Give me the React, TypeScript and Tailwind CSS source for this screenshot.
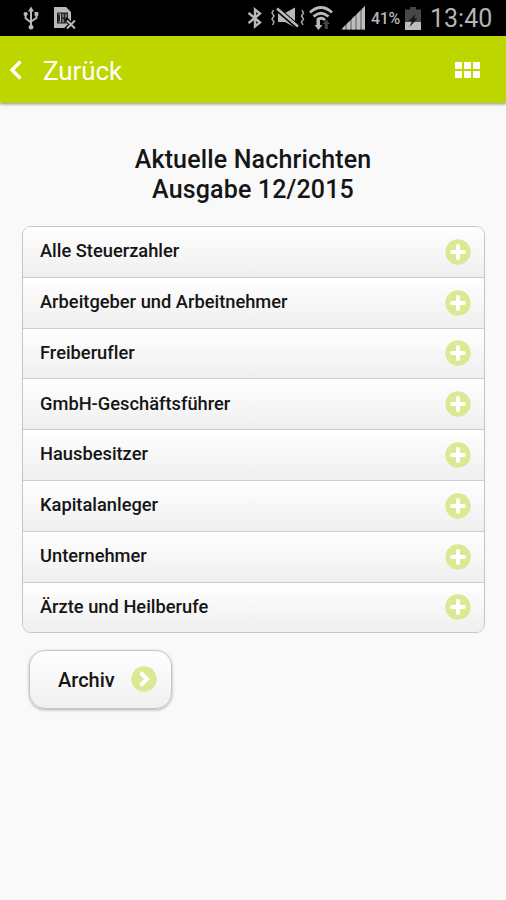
const nachrichten = [
  "Alle Steuerzahler",
  "Arbeitgeber und Arbeitnehmer",
  "Freiberufler",
  "GmbH-Geschäftsführer",
  "Hausbesitzer",
  "Kapitalanleger",
  "Unternehmer",
  "Ärzte und Heilberufe",
];

function UsbIcon() {
  return (
    <svg width="16" height="24" viewBox="0 0 16 24" fill="none" stroke="#b9b9b9" strokeWidth="2">
      <path d="M8 4v17M2.6 9v3.2L8 16.5M13.4 8v4L8 15.5" />
      <path d="M8 0.5l3 5H5z" fill="#b9b9b9" stroke="none" />
      <circle cx="8" cy="21.2" r="2.4" fill="#b9b9b9" stroke="none" />
      <circle cx="2.6" cy="8" r="2.1" fill="#b9b9b9" stroke="none" />
      <path d="M11.5 6h3.8v3.8h-3.8z" fill="#b9b9b9" stroke="none" />
    </svg>
  );
}

function SimIcon() {
  return (
    <svg width="23" height="24" viewBox="0 0 23 24" fill="none">
      <path d="M0 1h12l5 5v10l-4 6H0z" fill="#b9b9b9" />
      <path d="M3 6.5h11v11H3z" fill="#222" />
      <path d="M4.5 8h2v8h-2M9 8v3.5M12 8v3.5M9 13v3.5M12 13v3.5" stroke="#b9b9b9" strokeWidth="1" />
      <path d="M12 13l9.5 10M22 13.5L12 23" stroke="#000" strokeWidth="4" />
      <path d="M13 14.5l8 8M21 14.5l-8 8" stroke="#b9b9b9" strokeWidth="2" />
    </svg>
  );
}

function BluetoothIcon() {
  return (
    <svg width="16" height="22" viewBox="0 0 16 22" fill="none" stroke="#b9b9b9" strokeWidth="2.4">
      <path d="M1.5 5.8l11.5 9.7L8 19.5V2.5l5 4-11.5 9.7" />
    </svg>
  );
}

function MuteIcon() {
  return (
    <svg width="34" height="22" viewBox="0 0 34 22" fill="none">
      <path d="M7 6h7l10-5.5v20L14 15H7z" fill="#b9b9b9" />
      <path d="M5 1L27 20" stroke="#000" strokeWidth="5" />
      <path d="M6 1.5L27 19.5" stroke="#b9b9b9" strokeWidth="2.6" />
      <path d="M2.5 3l-1.500 3 2 3-2 3 2 3-1.500 3M31 3l1.500 3-2 3 2 3-2 3 1.500 3" stroke="#a6a6a6" strokeWidth="1.5" />
    </svg>
  );
}

function WifiIcon() {
  return (
    <svg width="24" height="25" viewBox="0 0 24 25" fill="none">
      <path d="M1 6.5Q12-3.500 23 6.500M4.500 10.500Q12 4 19.500 10.500M8 14Q12 10.500 16 14" stroke="#b9b9b9" strokeWidth="2.8" />
      <path d="M7.5 14H11v5h2.500L9.500 24 5.500 19h2z" fill="#b9b9b9" />
      <path d="M15.700 23v-5h-2.200l3.800-4.500 3.800 4.500h-2.300v5z" fill="#444" />
    </svg>
  );
}

function SignalIcon() {
  return (
    <svg width="24" height="24" viewBox="0 0 24 24">
      <path d="M0 23.500L24 0v23.500z" fill="#8c8c8c" />
      <path d="M2 21.500l2-2v4H2zM6 17.700l3-3v8.800H6zM11 12.800l3-3v13.700h-3zM16 8l3-3v18.500h-3zM21 3l3-3v23.500h-3z" fill="#bdbdbd" />
    </svg>
  );
}

function BatteryIcon() {
  return (
    <svg width="16" height="23" viewBox="0 0 16 23">
      <path d="M5 0h6v2.500h5V23H0V2.500h5z" fill="#474747" />
      <path d="M0 15h16v8H0z" fill="#bdbdbd" />
      <path d="M11 7L3.500 14h3.500L4.500 20l8-8.500H9z" fill="#161616" />
    </svg>
  );
}

function StatusBar() {
  return (
    <div className="flex h-9 items-center justify-between bg-black text-[#b5b5b5]">
      <div className="flex items-center gap-[15px] pl-[23px]">
        <UsbIcon />
        <SimIcon />
      </div>
      <div className="flex items-center pr-[13px]">
        <BluetoothIcon />
        <div className="ml-2 flex">
          <MuteIcon />
        </div>
        <div className="ml-1 flex">
          <WifiIcon />
        </div>
        <div className="ml-2 flex">
          <SignalIcon />
        </div>
        <span className="ml-1.5 w-[31px] pt-0.5 text-[16px] leading-none font-medium tracking-[-0.4px] whitespace-nowrap">41%</span>
        <div className="ml-[3px] flex">
          <BatteryIcon />
        </div>
        <span className="ml-[9px] w-[63px] text-[25px] leading-none whitespace-nowrap">13:40</span>
      </div>
    </div>
  );
}

function BackIcon() {
  return (
    <svg width="13" height="20" viewBox="0 0 13 20" fill="none">
      <path d="M11.500 1.500L3 10l8.500 8.500" stroke="#fff" strokeWidth="3.300" />
    </svg>
  );
}

function PlusIcon() {
  return (
    <svg width="26" height="26" viewBox="0 0 26 26">
      <circle cx="13" cy="13" r="12.700" fill="#dbe994" />
      <path d="M13 7v12M7 13h12" stroke="#fff" strokeWidth="4" strokeLinecap="round" />
    </svg>
  );
}

function ArrowIcon() {
  return (
    <svg width="26" height="26" viewBox="0 0 26 26" fill="none">
      <circle cx="13" cy="13" r="12.700" fill="#dbe994" />
      <path d="M9.500 6.500l6.500 6.500-6.500 6.500" stroke="#fff" strokeWidth="4" />
    </svg>
  );
}

export default function App() {
  return (
    <div className="h-[900px] w-[506px] overflow-hidden bg-[#f9f9f9] font-['Roboto',sans-serif] text-[#151515]">
      <StatusBar />

      <header className="flex h-[67px] items-center justify-between bg-[#bed600] pr-[26px] pl-[9px] text-white shadow-[0_1px_3px_rgba(0,0,0,0.45)]">
        <div className="flex items-center">
          <BackIcon />
          <span className="ml-[21px] pt-0.5 text-[26px] leading-none tracking-[-0.1px]">Zurück</span>
        </div>
        <div className="grid grid-cols-3 gap-0.5">
          {[0, 1, 2, 3, 4, 5].map((i) => (
            <div key={i} className="size-[7px] bg-white" />
          ))}
        </div>
      </header>

      <main className="px-[22px] pt-[42px]">
        <h1 className="text-center text-[25px] leading-[29.5px] font-medium tracking-[0.15px]">
          Aktuelle Nachrichten
          <br />
          Ausgabe 12/2015
        </h1>

        <ul className="mt-[22px] w-[463px] overflow-hidden rounded-[9px] border border-[#c5c5c5]">
          {nachrichten.map((titel) => (
            <li
              key={titel}
              className="flex h-[50.8px] items-center justify-between border-b border-[#cecece] bg-linear-to-b from-white to-[#efefef] pr-[13px] pl-[17px] last:h-[49.4px] last:border-b-0"
            >
              <span className="pb-px text-[18.3px] leading-none font-medium [font-variant-ligatures:none]">{titel}</span>
              <PlusIcon />
            </li>
          ))}
        </ul>

        <button className="mt-[17px] ml-[7px] flex h-[59px] w-[143px] items-center justify-between rounded-[16px] border border-[#c5c5c5] bg-linear-to-b from-white to-[#f0f0f0] pr-[14px] pl-7 shadow-[0_1px_3px_rgba(0,0,0,0.3)]">
          <span className="pt-px text-[20px] leading-none font-medium">Archiv</span>
          <ArrowIcon />
        </button>
      </main>
    </div>
  );
}
